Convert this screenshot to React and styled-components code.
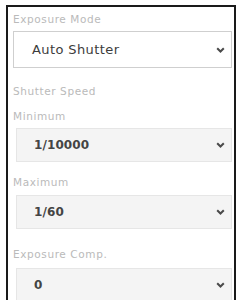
import React from 'react';
import styled, { createGlobalStyle } from 'styled-components';

const Global = createGlobalStyle`
  body {
    margin: 0;
    background: #fff;
    font-family: "DejaVu Sans", sans-serif;
  }
`

const Frame = styled.div`
  margin: 5px 4px 0 6px;
  height: 295px;
  border: 2px solid #1a1a1a;
  border-bottom: none;
  padding: 5px 2px 0 5px;
  display: flex;
  flex-direction: column;
  box-sizing: border-box;
  overflow: hidden;
`
const Label = styled.div`
  font-size: 10.5px;
  line-height: 14px;
  letter-spacing: 0.6px;
  color: #bababa;
  margin-top: ${p => p.$mt || 0}px;
`
const Select = styled.div`
  display: flex;
  flex-shrink: 0;
  align-items: center;
  justify-content: space-between;
  box-sizing: border-box;
  height: ${p => p.$main ? 37 : 34}px;
  margin-top: ${p => p.$mt || 5}px;
  margin-left: ${p => p.$main ? 0 : 3}px;
  padding: 0 6px 0 ${p => p.$main ? 18 : 17}px;
  background: ${p => p.$main ? '#fff' : '#f4f4f4'};
  border: 1px solid ${p => p.$main ? '#cfcfcf' : '#e6e6e6'};
  color: ${p => p.$main ? '#3c3c3c' : '#444'};
  font-size: ${p => p.$main ? 13 : 12}px;
  font-weight: ${p => p.$main ? 'normal' : 'bold'};
  letter-spacing: ${p => p.$main ? 0.4 : 0.1}px;
`
const Chevron = () => (
  <svg width="9" height="6" viewBox="0 0 9 6">
    <path d="M1.2 1.2 L4.5 4.5 L7.8 1.2" fill="none" stroke="#4a4a4a" strokeWidth="2" />
  </svg>
)

const App = () => {
  return (
    <>
      <Global />
      <Frame>
        <Label>Exposure Mode</Label>
        <Select $main>Auto Shutter<Chevron /></Select>
        <Label $mt={16}>Shutter Speed</Label>
        <Label $mt={11}>Minimum</Label>
        <Select>1/10000<Chevron /></Select>
        <Label $mt={13}>Maximum</Label>
        <Select $mt={6}>1/60<Chevron /></Select>
        <Label $mt={18}>Exposure Comp.</Label>
        <Select $mt={7}>0<Chevron /></Select>
      </Frame>
    </>
  );
};

export default App;
